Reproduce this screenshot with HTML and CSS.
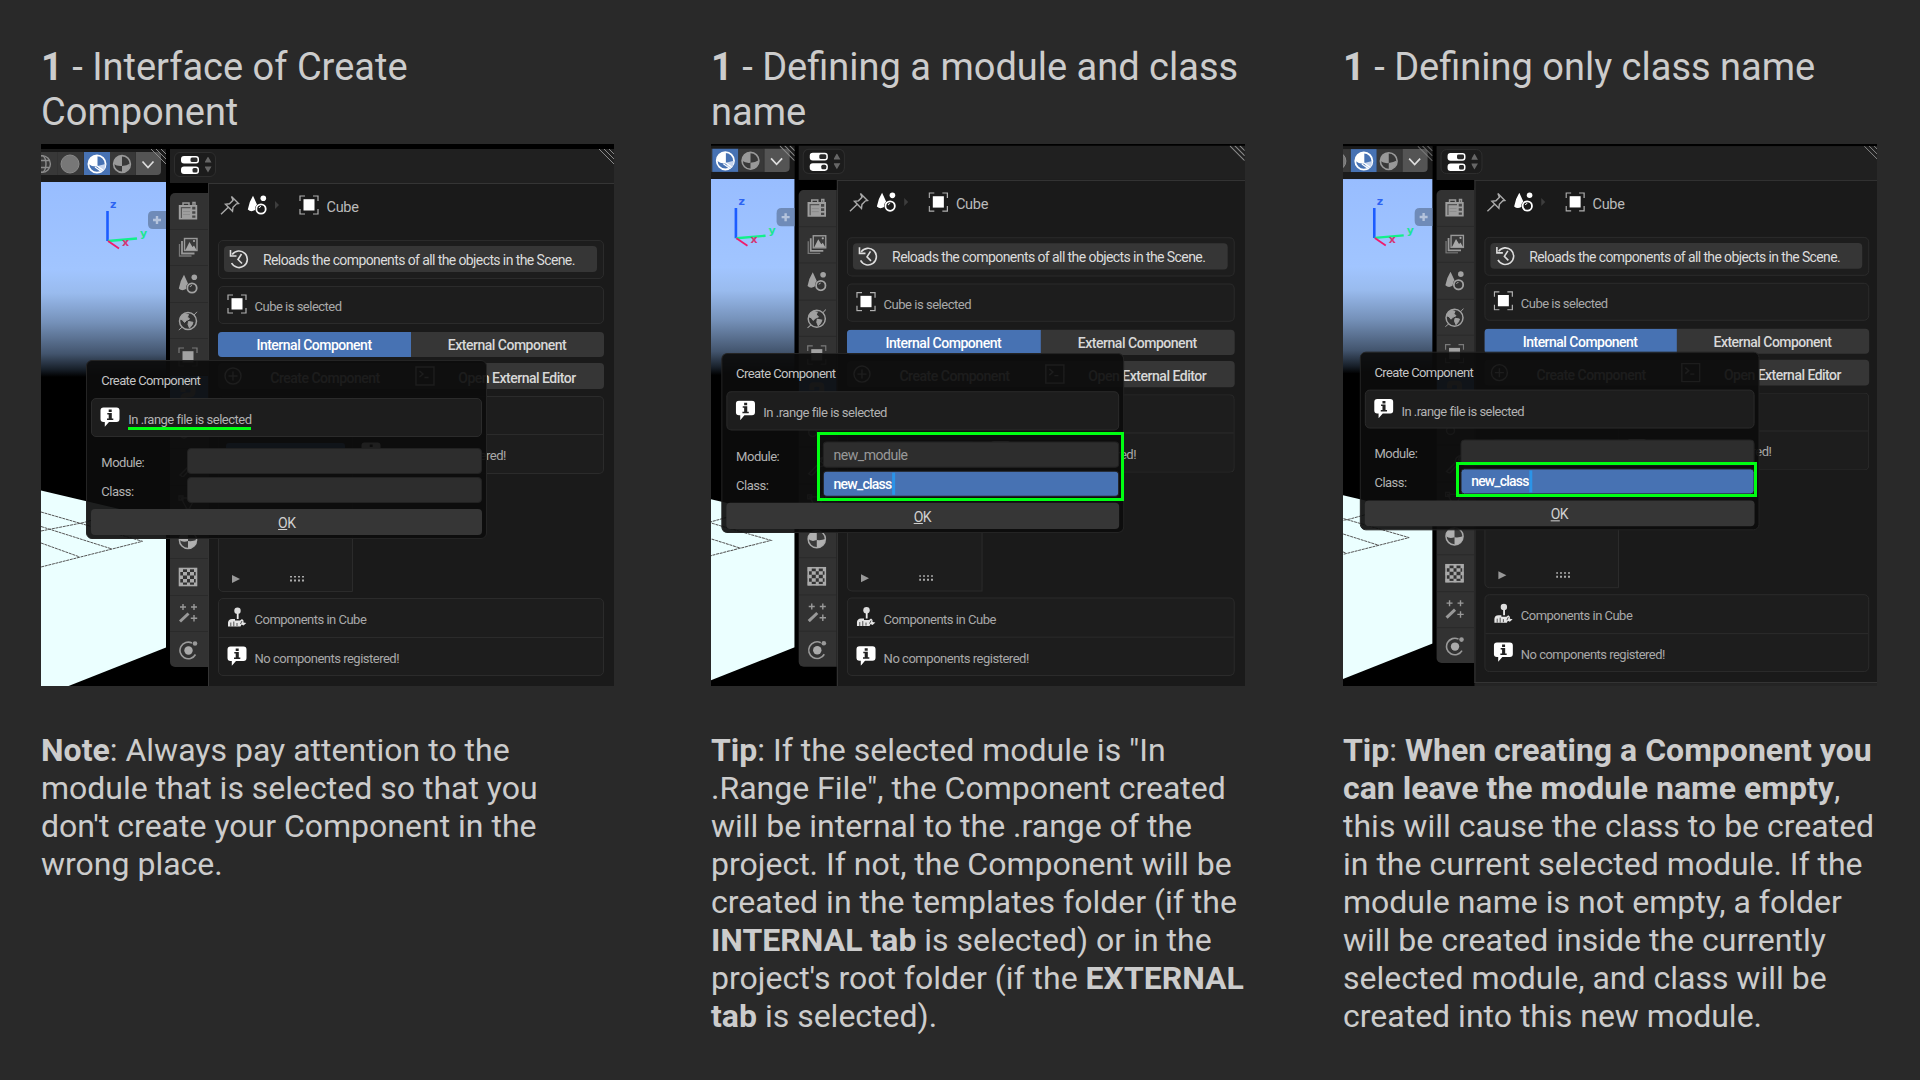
FILE: index.html
```html
<!DOCTYPE html>
<html lang="en">
<head>
<meta charset="utf-8">
<title>Create Component</title>
<link rel="stylesheet" href="styles.css">
</head>
<body>
<svg class="defs" width="0" height="0">
  <symbol id="wire" viewBox="0 0 20 20"><g fill="none" stroke="#8c8c8c" stroke-width="1.4"><circle cx="10" cy="10" r="8.4"/><ellipse cx="10" cy="10" rx="4" ry="8.4"/><path d="M2.5 6.5h15M2.5 13.5h15"/></g></symbol>
  <symbol id="solid" viewBox="0 0 20 20"><circle cx="10" cy="10" r="9" fill="#777" stroke="#8a8a8a"/></symbol>
  <symbol id="shade" viewBox="0 0 20 20"><circle cx="10" cy="10" r="8.4" fill="none" stroke="currentColor" stroke-width="1.6"/><path d="M10 1.6A8.4 8.4 0 0 0 1.6 10Q5 12.5 10 12z" fill="currentColor"/><path d="M10 12Q15 11.500 18 9.500A8.400 8.400 0 0 1 10 18.400z" fill="currentColor"/></symbol>
  <symbol id="lookdev" viewBox="0 0 20 20"><circle cx="10" cy="10" r="8.600" fill="none" stroke="#fff" stroke-width="1.800"/><path d="M10.500 1.600A8.400 8.400 0 0 0 1.600 10Q5 13 10.500 12.500z" fill="#fff"/><path d="M10.500 12l8-2-1 5-4 3.500z" fill="#c6d5ee"/><path d="M8 13l7 5M10 12l6 4" stroke="#fff" stroke-width="1.200"/></symbol>
  <symbol id="chev" viewBox="0 0 20 20"><path d="M4.500 7.500l5.500 6 5.500-6" fill="none" stroke="#ddd" stroke-width="1.700"/></symbol>
  <symbol id="grip" viewBox="0 0 15 15"><path d="M0 0l15 15M5 0l10 10M10 0l5 5" stroke="#8a8a8a" stroke-width="1"/></symbol>
  <symbol id="props" viewBox="0 0 20 20"><rect x="1" y="1" width="18" height="7.600" rx="3" fill="#fff"/><rect x="10.500" y="2.500" width="7" height="4.600" rx="1.500" fill="#2a2a2a"/><rect x="1" y="11.400" width="18" height="7.600" rx="3" fill="#fff"/><rect x="12.500" y="12.900" width="5" height="4.600" rx="1.500" fill="#2a2a2a"/></symbol>
  <symbol id="camera" viewBox="0 0 20 20"><path d="M5 4.500V2h6v2.500M15 4V1.500h2V4" fill="none" stroke="#999" stroke-width="1.500"/><path d="M.8 4h18.400v14.500H.8z" fill="#9e9e9e"/><path d="M2.800 6h9.700v1.200H2.800zM2.800 7h1.200v10H2.800z" fill="#555"/><path d="M14.200 5.800h3.200v2.800h-3.200zM14.200 10.200h3.200v2.600h-3.200zM14.200 14.600h3.200v2.200h-3.200z" fill="#484848"/><path d="M5 10.500h7M5 13.500h7" stroke="#858585" stroke-width=".7"/></symbol>
  <symbol id="layers" viewBox="0 0 20 20"><path d="M1.500 7v12h12" fill="none" stroke="#777" stroke-width="1.300"/><path d="M4 4v12.500h12.500" fill="none" stroke="#999" stroke-width="1.800"/><rect x="6.500" y="1.500" width="12.500" height="12" fill="#3a3a3a" stroke="#999" stroke-width="1.400"/><path d="M7.500 13l4-8 3 5 1.500-1.500 2.500 4.500z" fill="#a8a8a8"/><circle cx="16" cy="4" r="1.100" fill="#a8a8a8"/></symbol>
  <symbol id="scene" viewBox="0 0 20 20"><path d="M6 .8L10 9.500Q8 11 8 15Q4 17.500.8 14.500Q2 7 6 .8z" fill="currentColor"/><circle cx="16.300" cy="3.300" r="2.800" fill="currentColor"/><circle cx="14" cy="14" r="4.700" fill="none" stroke="currentColor" stroke-width="1.800"/><path d="M12 13q.5-1.500 2-1.500" stroke="currentColor" fill="none"/></symbol>
  <symbol id="world" viewBox="0 0 20 20"><circle cx="10" cy="10" r="8.500" fill="none" stroke="#a0a0a0" stroke-width="1.500"/><path d="M2.500 6l4-3.500 4 1-1 2.500 2 2-3 1.500-2 2-2-2.500-2.500-1zM10.500 10.500l4.500.8-1 2.700-2.500 3-1.500-3.500zM.8 19l3.500-3M16 4L19 .8" fill="#a0a0a0" stroke="#a0a0a0" stroke-width="1"/></symbol>
  <symbol id="cube" viewBox="0 0 20 20"><path d="M1 6V1h5M14 1h5v5M19 14v5h-5M6 19H1v-5" fill="none" stroke="currentColor" stroke-opacity=".65" stroke-width="1.200"/><rect x="4.500" y="4.200" width="11" height="11.300" fill="currentColor"/></symbol>
  <symbol id="snake" viewBox="0 0 20 20"><path d="M5 8V4q0-2 5-2t5 2v4q0 3-5 3t-5 3v3" fill="none" stroke="#999" stroke-width="5"/></symbol>
  <symbol id="wrench" viewBox="0 0 20 20"><path d="M2 18l9-9q-1-5 5-7l-2 4 3 2 2-3q0 6-6 6l-8 9z" fill="none" stroke="#999" stroke-width="1.500"/></symbol>
  <symbol id="nodes" viewBox="0 0 20 20"><path d="M3 4h14L10 17zM1 2h4v4H1zM15 2h4v4h-4zM8 15h4v4H8z" fill="none" stroke="#999" stroke-width="1.300"/></symbol>
  <symbol id="link" viewBox="0 0 20 20"><circle cx="6" cy="14" r="4" fill="none" stroke="#999" stroke-width="1.500"/><path d="M9 11l8-8" stroke="#999" stroke-width="3"/></symbol>
  <symbol id="material" viewBox="0 0 20 20"><circle cx="10" cy="10" r="8.600" fill="#3a3a3a" stroke="#a8a8a8" stroke-width="1.500"/><path d="M10 1.500V11q-5 2-8.500-1A8.500 8.500 0 0 1 10 1.500zM10 11q5 .5 8.500-1A8.500 8.500 0 0 1 10 18.500z" fill="#b0b0b0"/></symbol>
  <symbol id="checker" viewBox="0 0 20 20"><rect x="1.500" y="1.500" width="17" height="17" fill="#333" stroke="#aaa" stroke-width="1.600"/><path d="M1 1h4v4H1zM9 1h3v4H9zM16 1h3v4h-3zM5 5h4v3.500H5zM12 5h4v3.500h-4zM1 8.500h4V12H1zM9 8.500h3V12H9zM16 8.500h3V12h-3zM5 12h4v3.500H5zM12 12h4v3.500h-4zM1 15.500h4V19H1zM9 15.500h3V19H9zM16 15.500h3V19h-3z" fill="#aaa"/></symbol>
  <symbol id="wand" viewBox="0 0 20 20"><path d="M2 18.500l8.500-8" stroke="#999" stroke-width="3"/><path d="M5 1v6M2 4h6M16 1v6M13 4h6M16 12v6.500M12.800 15.200h6.400" stroke="#999" stroke-width="1.400"/></symbol>
  <symbol id="orbit" viewBox="0 0 20 20"><path d="M14 3A8.300 8.300 0 1 0 17.500 14.500" fill="none" stroke="#999" stroke-width="1.600"/><circle cx="10.500" cy="10.500" r="4.200" fill="#aaa"/><circle cx="17" cy="3.500" r="2.300" fill="#999"/></symbol>
  <symbol id="pin" viewBox="0 0 20 20"><path d="M11.500 1.500l7 7-2 .3-3.500 3.500-.5 4-7-7 4-.5L13 5.300zM8 12.500L1 19.200" fill="none" stroke="#aaa" stroke-width="1.400"/></symbol>
  <symbol id="reload" viewBox="0 0 20 20"><path d="M3.200 5.500A8.300 8.300 0 1 1 2.600 14M1.500 1v6h6M12.500 5L9 10.500l4 4" fill="none" stroke="#ddd" stroke-width="1.600"/></symbol>
  <symbol id="info" viewBox="0 0 20 20"><path d="M3.500.5h13Q19.500.5 19.500 3.500V12Q19.500 15 16.500 15H9L4.800 19.800V15H3.500Q.5 15 .5 12V3.500Q.5.500 3.500.5z" fill="#fff"/><path d="M8.700 2.500h3v2.400h-3zM7.300 6h4.500v5.500h1.500v1.500H7v-1.500h1.700V7.500H7.300z" fill="#222"/></symbol>
  <symbol id="stick" viewBox="0 0 20 20"><circle cx="10.500" cy="3.800" r="3.200" fill="#ddd"/><path d="M9.800 6.500h1.800V12H9.800z" fill="#eee"/><path d="M1 19.500v-4q.5-3.500 4-3.500h3v1.500h5l2-1.500 1.500 1.500v2l2.800.5-2.800 2.500-2-1-1 2z" fill="#e6e6e6"/><path d="M3.800 19.500v-4M6.800 19.500v-5M10 19v-3M13.500 17l1.500-3" stroke="#444" stroke-width=".9"/></symbol>
  <symbol id="plus" viewBox="0 0 20 20"><circle cx="10" cy="10" r="8" fill="none" stroke="#ddd" stroke-width="1.400"/><path d="M10 5.500v9M5.500 10h9" stroke="#ddd" stroke-width="1.400"/></symbol>
  <symbol id="term" viewBox="0 0 20 20"><path d="M1 1h18v18H1zM4.500 5l3.500 3-3.500 3M9.500 11.500h4" fill="none" stroke="#ddd" stroke-width="1.400"/></symbol>
</svg>

<main class="page">
  <section class="card first">
    <h2><b>1</b> - Interface of Create<br>Component</h2>
    <div class="shot" data-class=""></div>
    <p><b>Note</b>: Always pay attention to the<br>module that is selected so that you<br>don't create your Component in the<br>wrong place.</p>
  </section>
  <section class="card second">
    <h2><b>1</b> - Defining a module and class<br>name</h2>
    <div class="shot" data-module="new_module" data-class="new_class"><i class="mark"></i></div>
    <p><b>Tip</b>: If the selected module is "In<br>.Range File", the Component created<br>will be internal to the .range of the<br>project. If not, the Component will be<br>created in the templates folder (if the<br><b>INTERNAL tab</b> is selected) or in the<br>project's root folder (if the <b>EXTERNAL<br>tab</b> is selected).</p>
  </section>
  <section class="card third">
    <h2><b>1</b> - Defining only class name</h2>
    <div class="shot" data-class="new_class"><i class="mark"></i></div>
    <p><b>Tip</b>: <b>When creating a Component you<br>can leave the module name empty</b>,<br>this will cause the class to be created<br>in the current selected module. If the<br>module name is not empty, a folder<br>will be created inside the currently<br>selected module, and class will be<br>created into this new module.</p>
  </section>
</main>

<template id="editor">
  <div class="editor">
    <div class="left">
      <div class="shading">
        <span class="cut"><svg><use href="#wire"/></svg></span>
        <span><svg><use href="#solid"/></svg></span>
        <span class="on"><svg><use href="#lookdev"/></svg></span>
        <span><svg><use href="#shade"/></svg></span>
        <span class="drop"><svg><use href="#chev"/></svg></span>
        <svg class="grip"><use href="#grip"/></svg>
      </div>
      <svg class="view" viewBox="0 0 125 505">
        <defs><linearGradient id="sky" x1="0" y1="0" x2="0" y2="1">
          <stop offset="0" stop-color="#98bdff"/><stop offset=".45" stop-color="#a1c5ff"/><stop offset=".57" stop-color="#99bbee"/><stop offset=".72" stop-color="#7591b9"/><stop offset=".88" stop-color="#43556e"/><stop offset=".96" stop-color="#18202a"/><stop offset="1" stop-color="#000"/>
        </linearGradient></defs>
        <rect width="125" height="505" fill="#000"/><rect width="125" height="195" fill="url(#sky)"/>
        <path d="M0 308.500L125 338V465.500L25 505H0z" fill="#ebffff"/>
        <path d="M0 330L101.500 359.300L0 385M0 344.500L71 367M0 361L38 374.700M0 349L42 340.700L80 330" fill="none" stroke="#555" stroke-width="1" stroke-dasharray="3 .7"/>
        <path d="M66.500 29v30" stroke="#1c5cff" stroke-width="2.600"/>
        <path d="M67 59l29-2.500" stroke="#12f08a" stroke-width="2.400"/>
        <path d="M67 59l11 7.500" stroke="#f01a6c" stroke-width="1.800"/>
        <text x="69" y="26" class="axis" fill="#2c63f2">z</text><text x="99" y="55" class="axis" fill="#1de592">y</text><text x="81" y="64" class="axis" fill="#d23773">x</text>
        <path d="M112 29h13v18h-13q-5 0-5-5v-8q0-5 5-5z" fill="#6f8bb8"/><path d="M116 34v8M112 38h8" stroke="#b4c3dc" stroke-width="2.400"/>
      </svg>
    </div>
    <div class="right">
      <header class="head"><span class="kind"><svg><use href="#props"/></svg><i class="spin"></i></span><svg class="grip"><use href="#grip"/></svg></header>
      <div class="work">
        <nav class="tabs">
          <span><svg><use href="#camera"/></svg></span><span><svg><use href="#layers"/></svg></span><span><svg><use href="#scene"/></svg></span><span><svg><use href="#world"/></svg></span><span><svg><use href="#cube"/></svg></span><span class="on"><svg><use href="#snake"/></svg></span><span></span><span><svg><use href="#link"/></svg></span><span><svg><use href="#wrench"/></svg></span><span><svg><use href="#nodes"/></svg></span><span><svg><use href="#material"/></svg></span><span><svg><use href="#checker"/></svg></span><span><svg><use href="#wand"/></svg></span><span><svg><use href="#orbit"/></svg></span>
        </nav>
        <div class="main">
          <div class="crumbs"><svg><use href="#pin"/></svg><svg class="scene"><use href="#scene"/></svg><i class="caret"></i><svg class="white"><use href="#cube"/></svg><span class="t-cube">Cube</span></div>
          <div class="box reload"><div class="btn"><svg><use href="#reload"/></svg><span class="t-reload">Reloads the components of all the objects in the Scene.</span></div></div>
          <div class="box row lone"><svg class="white"><use href="#cube"/></svg><span>Cube is selected</span></div>
          <div class="seg"><span class="on">Internal Component</span><span>External Component</span></div>
          <div class="seg acts"><span><svg><use href="#plus"/></svg><em>Create Component</em></span><span><svg><use href="#term"/></svg><em>Open External Editor</em></span></div>
          <div class="lists">
            <div class="list"><i class="sel"></i><div class="foot"><i class="play"></i><i class="dots"></i></div></div>
            <div class="pane"><div></div><div class="row"><svg><use href="#info"/></svg><span>No module registered!</span></div></div>
          </div>
          <div class="box comps">
            <div class="row"><svg><use href="#stick"/></svg><span class="t-comp">Components in Cube</span></div>
            <div class="row"><svg><use href="#info"/></svg><span>No components registered!</span></div>
          </div>
        </div>
      </div>
    </div>
    <div class="popup">
      <div class="title">Create Component</div>
      <div class="msg"><svg><use href="#info"/></svg><span>In .range file is selected</span></div>
      <label><span>Module:</span><span class="field module"></span></label>
      <label><span>Class:</span><span class="field class"></span></label>
      <div class="ok"><span><u>O</u>K</span></div>
    </div>
  </div>
</template>
<script src="app.js"></script>
</body>
</html>
```

FILE: styles.css
```css
* { box-sizing: border-box; }
body { margin: 0; width: 1920px; height: 1080px; overflow: hidden; background: #292929; color: #ccc; font-family: Roboto, "Liberation Sans", sans-serif; }
.defs { position: absolute; }
.page { display: grid; grid-template-columns: 573px 534px 535px; column-gap: 97px; padding: 44px 0 0 41px; }
.third { margin-left: 1px; }
.card { white-space: nowrap; }
h2 { margin: 0; height: 100px; padding-top: 1px; font-size: 38px; line-height: 45.3px; font-weight: 400; }
h2 b { font-weight: 700; }
p { margin: 46px 0 0; font-size: 32px; line-height: 37.95px; }

.shot { position: relative; height: 542px; overflow: hidden; background: #000; }
.mark { position: absolute; z-index: 3; border: 3px solid #00ff12; }
.second .mark { left: 106px; top: 288px; width: 307px; height: 69px; }
.third .mark { left: 113px; top: 318px; width: 301px; height: 35px; }

.editor { position: relative; display: grid; grid-template-columns: 125px 446px; column-gap: 4px; width: 575px; height: 548px; padding-top: 5px; background: #000; transform-origin: 0 0; font-size: 14px; }
.second .editor { transform: translate(-41.900px, -3.300px) scale(1.0046, 1.006); }
.third .editor { transform: translate(-35px, -2.900px) scale(.9968, .998); }
.editor svg { width: 20px; height: 20px; flex: none; display: block; }

.shading { position: relative; display: flex; height: 33px; padding-top: 3px; background: #1b1b1b; }
.shading span { display: flex; align-items: center; justify-content: center; width: 26px; height: 23px; padding-right: 1px; background: #383838; border-right: 1px solid #333; color: #999; }
.shading .cut { width: 17px; justify-content: flex-end; padding-right: 5px; overflow: hidden; }
.shading .on { background: #4772b3; border: 0; }
.shading .drop { background: #545454; border-radius: 0 4px 4px 0; border: 0; width: 25px; }
.editor .grip { position: absolute; right: 0; top: 0; width: 15px; height: 15px; }
.head .grip { right: 2px; }
.editor .view { width: 125px; height: 505px; }
.axis { font: 700 11px "DejaVu Sans", sans-serif; }

.head { position: relative; height: 33.500px; background: #202020; padding: 3px 0 0 3.500px; }
.kind { display: flex; align-items: center; gap: 5px; width: 42px; height: 25px; padding-left: 5px; border: 1px solid #2e2e2e; border-radius: 6px; background: #1c1c1c; }
.spin { width: 7px; height: 16px; background: linear-gradient(#666, #666); clip-path: polygon(50% 0, 100% 38%, 0 38%, 0 62%, 100% 62%, 50% 100%, 0 62%, 0 38%); }
.work { display: flex; height: 510px; }
.tabs { width: 37.500px; height: 474px; margin-top: 10.500px; background: #323232; border-radius: 5px 0 0 5px; overflow: hidden; color: #a2a2a2; }
.tabs span { display: flex; align-items: center; justify-content: center; height: 36.600px; padding-right: 1.500px; border-bottom: 1px solid #2a2a2a; }
.tabs span:nth-child(7) { height: 0; border: 0; }
.tabs .on { background: #4772b3; }
.main { width: 408px; height: 504.500px; padding: 0 11px 0 9px; border: 1px solid #353535; border-right-color: #2d2d2d; background: #1a1a1a; box-shadow: 0 8px 0 #242424; color: #a9a9a9; }

.crumbs { display: flex; align-items: center; height: 56px; padding: 0 0 13px 2px; }
.crumbs .scene { margin-left: 7px; color: #fff; }
.caret { margin: 0 20px 0 8px; border: 4px solid transparent; border-left-color: #3d3d3d; border-right: 0; }
.white { color: #fff; }
.t-cube { margin: 4px 0 0 8px; font-size: 14.500px; letter-spacing: -.3px; color: #bbb; }
.box { border: 1.500px solid #2b2b2b; border-radius: 5px; background: #1d1d1d; }
.reload { height: 39px; padding: 5.500px; }
.btn { display: flex; align-items: center; height: 25.500px; background: #363636; border-radius: 4px; padding-left: 5px; }
.t-reload { margin-left: 14px; color: #dcdcdc; letter-spacing: -.6px; padding-top: 2px; }
.row { display: flex; align-items: center; padding-left: 8px; font-size: 13px; letter-spacing: -.5px; }
.row svg { margin-bottom: 2px; }
.row span { margin: 4px 0 0 8px; }
.lone { height: 38.500px; margin-top: 7px; }
.seg { display: flex; height: 25px; margin-top: 7.500px; border-radius: 4px; overflow: hidden; background: #363636; color: #d8d8d8; letter-spacing: -.5px; font-weight: 500; }
.seg > span { flex: 1; display: flex; align-items: center; justify-content: center; padding-top: 2px; }
.seg .on { background: #4772b3; color: #fff; }
.acts { height: 26px; margin-top: 6.500px; }
.acts > span { justify-content: flex-start; padding: 0 4px 0 5px; }
.acts > span + span { padding: 0 4px 0 3px; }
.acts em { flex: 1; text-align: center; font-style: normal; padding-top: 3px; }
.lists { display: flex; height: 196px; margin-top: 6.500px; }
.list { display: flex; flex-direction: column; justify-content: space-between; width: 135px; border: 1.500px solid #2b2b2b; border-radius: 5px 0 0 5px; background: #1d1d1d; padding: 46px 7px 7px; }
.sel { height: 25px; border-radius: 3px; background: #4772b3; }
.foot { display: flex; align-items: center; height: 10px; }
.play { margin-left: 6px; border: 4px solid transparent; border-left: 8px solid #999; border-right: 0; }
.dots { margin-left: 50px; width: 15px; height: 6px; background: repeating-linear-gradient(90deg, #aaa 0 2px, transparent 2px 4px); clip-path: polygon(0 0, 100% 0, 100% 2px, 0 2px, 0 4px, 100% 4px, 100% 100%, 0 100%); }
.pane { flex: 1; height: 78px; border: 1.500px solid #2b2b2b; border-left: 0; border-radius: 0 5px 5px 0; background: #1d1d1d; }
.pane > div { height: 37.500px; }
.pane > .row { border-top: 1.500px solid #2b2b2b; }
.comps { height: 78px; margin-top: 6.500px; }
.comps .row { height: 37.500px; }
.comps .row + .row { height: 39px; border-top: 1.500px solid #2b2b2b; }

.popup { position: absolute; left: 45.300px; top: 216px; width: 401px; height: 179px; padding: 0 4px; border: 1px solid #242424; border-radius: 6px; background: rgba(12, 12, 12, .92); color: #b2b2b2; font-size: 13px; letter-spacing: -.5px; }
.second .popup, .third .popup { left: 51.700px; top: 211.300px; }
.title { height: 36.500px; padding: 10.500px 0 0 10px; line-height: 17px; letter-spacing: -.6px; color: #c4c4c4; }
.msg { display: flex; align-items: center; height: 39px; padding-left: 8px; border: 1.500px solid #2b2b2b; border-radius: 5px; background: #1d1d1d; }
.msg svg { margin-bottom: 1px; }
.msg span { position: relative; margin: 5px 0 0 8px; }
.first .msg span { box-shadow: 0 3px 0 #00ff12; }
.popup label { display: flex; align-items: center; justify-content: space-between; height: 26px; margin-top: 3px; padding-left: 10px; }
.popup label > span:first-child { padding-top: 3px; }
.msg + label { margin-top: 11px; }
.field { display: flex; align-items: center; width: 295px; height: 26px; padding-left: 10px; border-radius: 4px; background: #2d2d2d; border: 1px solid #222; color: #999; font-size: 14px; }
.field.edit { background: #4772b3; color: #fff; font-weight: 500; letter-spacing: -.8px; }
.field.edit::after { content: ""; width: 2.500px; height: 22px; margin-left: 1px; background: #2b94e8; }
.ok { display: flex; align-items: center; justify-content: center; height: 26px; margin-top: 6.500px; padding-top: 2px; border-radius: 4px; background: #363636; color: #d0d0d0; font-size: 14px; }
```

FILE: app.js
```js
const template = document.getElementById("editor");
document.querySelectorAll(".shot").forEach((shot) => {
  const editor = template.content.cloneNode(true);
  editor.querySelector(".module").textContent = shot.dataset.module || "";
  const field = editor.querySelector(".field.class");
  field.textContent = shot.dataset.class;
  if (shot.dataset.class) field.classList.add("edit");
  shot.prepend(editor);
});
```
